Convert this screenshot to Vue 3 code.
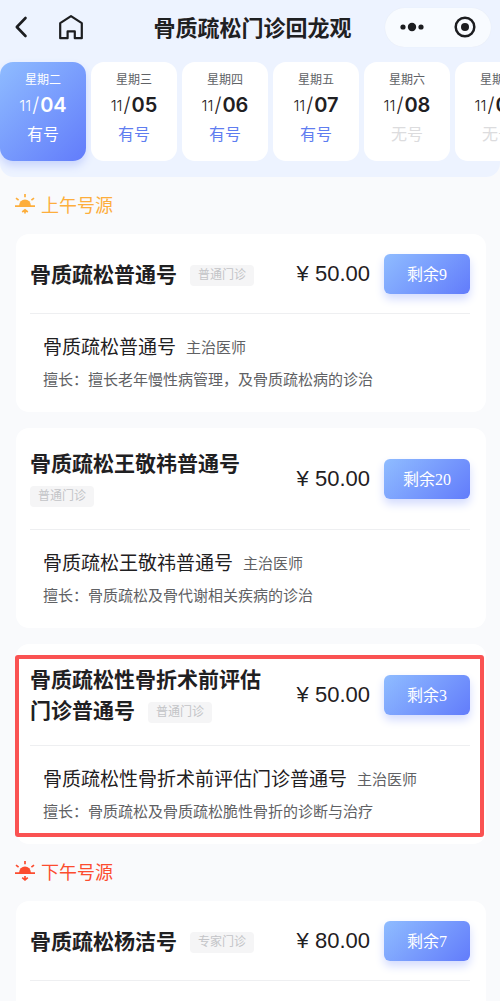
<script setup>
import { ref } from 'vue'

const selected = ref(0)

const days = [
  { week: '星期二', month: '11', day: '04', open: true },
  { week: '星期三', month: '11', day: '05', open: true },
  { week: '星期四', month: '11', day: '06', open: true },
  { week: '星期五', month: '11', day: '07', open: true },
  { week: '星期六', month: '11', day: '08', open: false },
  { week: '星期日', month: '11', day: '09', open: false }
]

const sections = [
  {
    key: 'am',
    title: '上午号源',
    clinics: [
      {
        name: '骨质疏松普通号', tag: '普通门诊', price: '50.00', left: 9,
        role: '主治医师', skill: '擅长老年慢性病管理，及骨质疏松病的诊治'
      },
      {
        name: '骨质疏松王敬祎普通号', tag: '普通门诊', price: '50.00', left: 20,
        role: '主治医师', skill: '骨质疏松及骨代谢相关疾病的诊治'
      },
      {
        name: '骨质疏松性骨折术前评估门诊普通号', tag: '普通门诊', price: '50.00', left: 3,
        role: '主治医师', skill: '骨质疏松及骨质疏松脆性骨折的诊断与治疗', marked: true
      }
    ]
  },
  {
    key: 'pm',
    title: '下午号源',
    clinics: [
      { name: '骨质疏松杨洁号', tag: '专家门诊', price: '80.00', left: 7 }
    ]
  }
]
</script>

<template>
  <div class="page">
    <header class="top">
      <div class="navbar">
        <div class="nav-left">
          <button class="icon-btn" type="button" aria-label="返回">
            <svg width="14" height="24" viewBox="0 0 14 24" fill="none" stroke="#1c1d20" stroke-width="2.6" stroke-linecap="round" stroke-linejoin="round">
              <path d="M11.5 3 2.8 12 11.5 21" />
            </svg>
          </button>
          <button class="icon-btn" type="button" aria-label="首页">
            <svg width="26" height="26" viewBox="0 0 26 26" fill="none" stroke="#1c1d20" stroke-width="2.2" stroke-linejoin="round">
              <path d="M2.2 9.2 13 2.2 23.8 9.2V24.2H16.8V17.4H9.6V24.2H2.2Z" />
            </svg>
          </button>
        </div>
        <h1 class="title">骨质疏松门诊回龙观</h1>
        <div class="capsule">
          <button class="icon-btn" type="button" aria-label="更多">
            <svg width="26" height="24" viewBox="0 0 26 24" fill="#1c1d20">
              <circle cx="4" cy="12" r="2.6" />
              <circle cx="13" cy="12" r="4.2" />
              <circle cx="22" cy="12" r="2.6" />
            </svg>
          </button>
          <button class="icon-btn" type="button" aria-label="关闭">
            <svg width="24" height="24" viewBox="0 0 24 24">
              <circle cx="12" cy="12" r="9.3" fill="none" stroke="#1c1d20" stroke-width="2.5" />
              <circle cx="12" cy="12" r="4" fill="#1c1d20" />
            </svg>
          </button>
        </div>
      </div>

      <nav class="days" aria-label="日期">
        <button
          v-for="(d, i) in days"
          :key="d.day"
          type="button"
          class="day"
          :class="{ active: selected === i, closed: !d.open }"
          @click="selected = i"
        >
          <span class="week">{{ d.week }}</span>
          <span class="date"><span class="month">{{ d.month }}</span><span class="slash">/</span><b>{{ d.day }}</b></span>
          <span class="status">{{ d.open ? '有号' : '无号' }}</span>
        </button>
      </nav>
    </header>

    <main class="list">
      <section v-for="s in sections" :key="s.key" class="section">
        <h2 class="section-title" :class="s.key">
          <svg width="20" height="20" viewBox="0 0 20 20" fill="none" stroke="currentColor" stroke-width="1.7">
            <path d="M4 12a6 6.6 0 0 1 12 0Z" fill="currentColor" stroke="none" />
            <path d="M0 12.2H20M10 0V3.2M1 4.2 3.6 6.2M19 4.2 16.4 6.2" />
            <path v-if="s.key === 'am'" d="M10 19.6V16M7.2 18 10 15.8 12.8 18" />
            <path v-else d="M10 15V18.6M7.2 16.6 10 18.8 12.8 16.6" />
          </svg>
          <span>{{ s.title }}</span>
        </h2>
        <div class="cards">
          <article v-for="c in s.clinics" :key="c.name" class="card">
            <div class="card-head">
              <h3 class="card-title"><span class="name">{{ c.name }}</span><wbr><span class="tag">{{ c.tag }}</span></h3>
              <span class="price">¥ {{ c.price }}</span>
              <button type="button" class="book">剩余{{ c.left }}</button>
            </div>
            <div class="card-body">
              <template v-if="c.role">
                <p class="doctor"><span>{{ c.name }}</span><span class="role">{{ c.role }}</span></p>
                <p class="skill">擅长：{{ c.skill }}</p>
              </template>
            </div>
            <div v-if="c.marked" class="marker"></div>
          </article>
        </div>
      </section>
    </main>
  </div>
</template>

<style>
body {
  margin: 0;
  background: #f9fafc;
}
</style>

<style scoped>
.page {
  height: 100vh;
  display: flex;
  flex-direction: column;
  overflow: hidden;
  background: #f9fafc;
  color: #1f2022;
  font-family: "Liberation Sans", "Noto Sans CJK SC", sans-serif;
}

h1, h2, h3, p {
  margin: 0;
}

button {
  border: 0;
  margin: 0;
  padding: 0;
  background: none;
  color: inherit;
  font-family: inherit;
  cursor: pointer;
}

.top {
  flex: none;
  background: #edf3ff;
  border-radius: 0 0 14px 14px;
}

.navbar {
  display: grid;
  grid-template-columns: 1fr auto 1fr;
  align-items: center;
  height: 54px;
  padding: 0 9px 0 14px;
}

.nav-left {
  display: flex;
  align-items: center;
  gap: 30px;
}

.icon-btn {
  display: flex;
}

.title {
  padding-top: 3px;
  font-size: 22px;
  line-height: 32px;
  font-weight: 700;
  white-space: nowrap;
}

.capsule {
  justify-self: end;
  display: flex;
  align-items: center;
  justify-content: space-between;
  width: 106px;
  height: 39px;
  box-sizing: border-box;
  padding: 0 14px;
  border-radius: 20px;
  background: #f8fbff;
  box-shadow: 0 0 1px #dfe5ee;
}

.days {
  display: flex;
  gap: 5px;
  padding: 8px 0 16px;
  overflow-x: auto;
  scrollbar-width: none;
}

.day {
  flex: none;
  display: flex;
  flex-direction: column;
  align-items: center;
  width: 86px;
  padding: 8px 0 11px;
  border-radius: 13px;
  background: #fff;
}

.week {
  font-size: 12px;
  line-height: 20px;
  color: #606266;
}

.date {
  display: flex;
  align-items: center;
  height: 30px;
  font-family: Inter, "Liberation Sans", sans-serif;
  font-size: 20px;
}

.date b {
  font-weight: 600;
}

.month {
  font-size: 15px;
  font-weight: 300;
}

.slash {
  margin: 0 1px;
  font-weight: 300;
}

.status {
  font-size: 16px;
  line-height: 30px;
  color: #5f7df0;
}

.closed .status {
  color: #dcdcde;
}

.active {
  background: linear-gradient(135deg, #8fbcff, #627cfb);
  box-shadow: 0 5px 9px #c9d5fd;
  color: #fff;
}

.active .week,
.active .status {
  color: #fff;
}

.list {
  flex: 1;
  min-height: 0;
  overflow-y: auto;
  scrollbar-width: none;
}

.section-title {
  display: flex;
  align-items: center;
  gap: 6px;
  height: 57px;
  box-sizing: border-box;
  padding: 0 15px 4px;
  font-size: 18px;
  font-weight: 400;
}

.am {
  color: #fdae3c;
}

.pm {
  color: #fc4c2f;
}

.cards {
  display: flex;
  flex-direction: column;
  gap: 16px;
  padding: 0 14px 0 16px;
}

.card {
  position: relative;
  padding: 0 16px 0 14px;
  border-radius: 13px;
  background: #fff;
}

.card-head {
  display: flex;
  align-items: center;
  padding: 20px 0 19px;
  border-bottom: 1px solid #eeeff1;
}

.card-title {
  flex: 1;
  min-width: 0;
  margin-right: 20px;
  font-size: 21px;
  line-height: 31px;
  font-weight: 700;
}

.name {
  margin-right: 13px;
}

.tag {
  display: inline-block;
  padding: 0 8px;
  border-radius: 4px;
  background: #f5f5f6;
  color: #c3c4c7;
  font-size: 12px;
  line-height: 21px;
  font-weight: 400;
  vertical-align: middle;
}

.price {
  margin-right: 14px;
  font-size: 22px;
  line-height: 30px;
  white-space: nowrap;
}

.book {
  flex: none;
  width: 86px;
  height: 40px;
  padding-bottom: 2px;
  border-radius: 6px;
  background: linear-gradient(135deg, #8fbcff, #627cfb);
  box-shadow: 0 5px 10px #d3dbfe;
  color: #fff;
  font-family: "Liberation Serif", "Noto Sans CJK SC", serif;
  font-size: 16px;
}

.card-body {
  padding: 21px 0 20px 13px;
}

.doctor {
  display: flex;
  align-items: center;
  gap: 10px;
  font-size: 19px;
  line-height: 26px;
  white-space: nowrap;
}

.role {
  color: #606164;
  font-size: 15px;
}

.skill {
  margin-top: 7px;
  color: #606164;
  font-size: 15px;
  line-height: 24px;
}

.marker {
  position: absolute;
  inset: 11px 2px 7px -1px;
  border: 4px solid #fa5252;
  border-radius: 3px;
  pointer-events: none;
}
</style>
